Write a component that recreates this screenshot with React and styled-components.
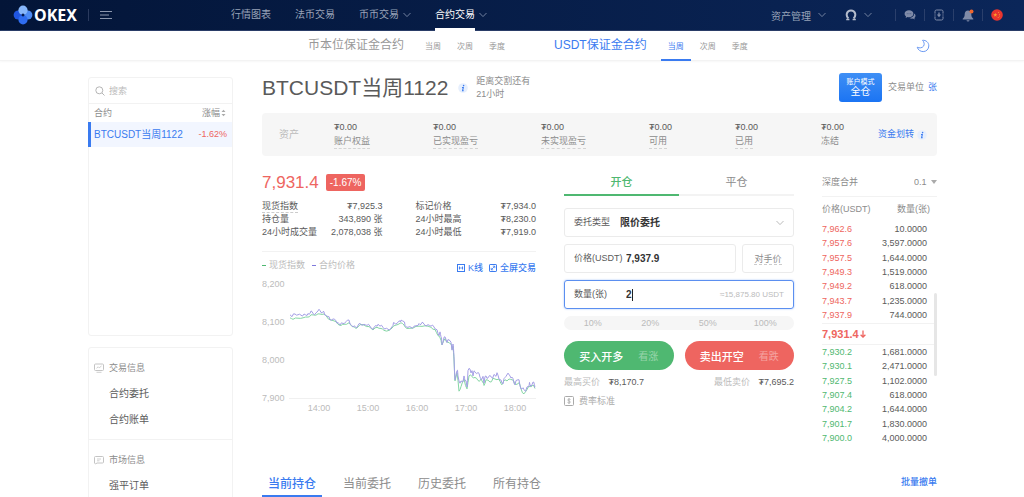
import React, { useState } from "react";
import styled, { createGlobalStyle } from "styled-components";

const colors = {
  blue: "#3a7bf0",
  green: "#4fb871",
  red: "#ee6560",
  text: "#5a5a5a",
  muted: "#8c8c8c",
  faint: "#bbb",
  line: "#f2f2f2",
  panel: "#f6f6f6",
};

const navItems = [
  { label: "行情图表" },
  { label: "法币交易" },
  { label: "币币交易", menu: true },
  { label: "合约交易", menu: true, active: true },
];

const contractGroups = [
  { title: "币本位保证金合约", tabs: ["当周", "次周", "季度"] },
  { title: "USDT保证金合约", tabs: ["当周", "次周", "季度"], active: "当周" },
];

const assets = [
  { label: "账户权益", hint: true },
  { label: "已实现盈亏", hint: true },
  { label: "未实现盈亏", hint: true },
  { label: "可用", hint: true },
  { label: "已用", hint: true },
  { label: "冻结" },
];

const stats = [
  [
    { label: "现货指数", value: "₮7,925.3", hint: true },
    { label: "持仓量", value: "343,890 张" },
    { label: "24小时成交量", value: "2,078,038 张" },
  ],
  [
    { label: "标记价格", value: "₮7,934.0" },
    { label: "24小时最高", value: "₮8,230.0" },
    { label: "24小时最低", value: "₮7,919.0" },
  ],
];

const asks = [
  ["7,962.6", "10.0000"],
  ["7,957.6", "3,597.0000"],
  ["7,957.5", "1,644.0000"],
  ["7,949.3", "1,519.0000"],
  ["7,949.2", "618.0000"],
  ["7,943.7", "1,235.0000"],
  ["7,937.9", "744.0000"],
];

const bids = [
  ["7,930.2", "1,681.0000"],
  ["7,930.1", "2,471.0000"],
  ["7,927.5", "1,102.0000"],
  ["7,907.4", "618.0000"],
  ["7,904.2", "1,644.0000"],
  ["7,901.7", "1,830.0000"],
  ["7,900.0", "4,000.0000"],
];

// [x, price] samples, x is in chart units
const contractSeries = [
  [28, 8119], [30, 8114], [33, 8121], [36, 8119], [39, 8118], [42, 8121], [45, 8117], [47, 8120],
  [49, 8129], [51, 8122], [54, 8124], [56, 8129], [58, 8130], [60, 8124], [62, 8127], [63, 8119],
  [66, 8114], [68, 8106], [71, 8108], [74, 8103], [76, 8099], [78, 8092], [81, 8096], [84, 8101],
  [87, 8105], [89, 8093], [91, 8087], [94, 8085], [96, 8091], [98, 8096], [102, 8094], [105, 8091],
  [108, 8089], [111, 8081], [114, 8091], [116, 8094], [118, 8089], [121, 8086], [123, 8082],
  [126, 8081], [129, 8084], [131, 8091], [132, 8098], [135, 8096], [138, 8103], [139, 8105],
  [142, 8101], [143, 8091], [146, 8086], [149, 8086], [152, 8089], [156, 8091], [158, 8093],
  [160, 8099], [162, 8094], [166, 8093], [169, 8089], [172, 8087], [174, 8081], [176, 8070],
  [178, 8074], [179, 8061], [180, 8040], [182, 8060], [184, 8054], [186, 8054], [188, 8051],
  [190, 8026], [191, 8042], [192, 8009], [193, 7948], [195, 7972], [196, 7958], [198, 7939],
  [200, 7943], [202, 7958], [203, 7946], [205, 7929], [206, 7972], [208, 7976], [210, 7972],
  [211, 7958], [213, 7969], [216, 7967], [218, 7955], [221, 7957], [222, 7939], [224, 7958],
  [226, 7953], [229, 7957], [232, 7962], [234, 7957], [236, 7960], [238, 7948], [240, 7939],
  [242, 7951], [244, 7957], [248, 7958], [250, 7955], [252, 7939], [254, 7946], [256, 7948],
  [258, 7932], [260, 7924], [262, 7922], [265, 7929], [267, 7931], [268, 7935], [270, 7935],
  [272, 7941], [273, 7932],
];

const indexSeries = [
  [28, 8111], [31, 8107], [36, 8110], [41, 8111], [46, 8113], [49, 8119], [54, 8118], [58, 8121],
  [62, 8121], [65, 8113], [68, 8106], [72, 8103], [76, 8094], [79, 8091], [82, 8094], [87, 8098],
  [90, 8088], [94, 8083], [98, 8093], [102, 8092], [107, 8088], [111, 8079], [115, 8086],
  [119, 8083], [122, 8078], [127, 8078], [130, 8084], [133, 8091], [139, 8098], [142, 8092],
  [145, 8083], [151, 8084], [157, 8089], [163, 8090], [169, 8086], [173, 8080], [176, 8064],
  [179, 8052], [180, 8040], [183, 8056], [186, 8047], [189, 8042], [190, 8028], [191, 8036],
  [192, 8000], [193, 7945], [195, 7966], [197, 7918], [199, 7930], [202, 7950], [205, 7924],
  [207, 7958], [210, 7956], [213, 7954], [216, 7946], [219, 7950], [221, 7940], [222, 7933],
  [224, 7948], [228, 7942], [231, 7952], [235, 7948], [238, 7944], [240, 7935], [243, 7948],
  [247, 7950], [250, 7948], [253, 7936], [257, 7940], [259, 7924], [262, 7911], [265, 7922],
  [268, 7930], [271, 7934], [273, 7925],
];

// the trade price gets a small tick between two samples, larger after the drop
const toPath = (series, spread) => {
  const y = (price) => 120 - ((price - 7900) * 38) / 100;
  let d = "";
  series.forEach(([x, price], i) => {
    if (i === 0) {
      d = `M${x} ${y(price)}`;
      return;
    }
    const [px, pp] = series[i - 1];
    const mid = (px + x) / 2;
    const jitter = (((i * 7) % 5) - 2) * (x > 174 ? spread * 2 : spread);
    d += ` L${mid} ${y((pp + price) / 2 + jitter)} L${x} ${y(price)}`;
  });
  return d;
};

const GlobalStyle = createGlobalStyle`
  * {
    box-sizing: border-box;
  }

  body {
    margin: 0;
    background: #fff;
  }

  body, button, input, select {
    font-family: "Liberation Sans", "Noto Sans CJK SC", sans-serif;
  }

  button, input, select {
    margin: 0;
    padding: 0;
    border: 0;
    background: none;
    font-size: 9px;
    color: inherit;
    outline: none;
  }

  a {
    color: inherit;
    text-decoration: none;
  }

  svg {
    display: block;
    flex: none;
  }
`;

/* ---------- icons ---------- */

const Chevron = ({ color = "#71809f" }) => (
  <svg width="8" height="6" viewBox="0 0 8 6" fill="none" stroke={color}>
    <path d="M0.5 1 L4 4.6 L7.5 1" />
  </svg>
);

const Logo = () => (
  <svg width="20" height="20" viewBox="0 0 20 20">
    <circle cx="5.2" cy="10" r="4.6" fill="#1f55e0" />
    <circle cx="14.8" cy="10" r="4.6" fill="#4d8bf3" />
    <circle cx="10" cy="14.8" r="4.6" fill="#2f6df0" />
    <circle cx="10" cy="5.2" r="4.6" fill="#86b6fa" />
    <path d="M10 8.2 L11.8 10 L10 11.8 L8.2 10Z" fill="#04184a" />
  </svg>
);

const MenuIcon = () => (
  <svg width="12" height="10" viewBox="0 0 12 10" stroke="#8b96ad">
    <path d="M0 1.5H12M0 5H9M0 8.5H12" />
  </svg>
);

const HeadsetIcon = () => (
  <svg width="12" height="12" viewBox="0 0 12 12" fill="none" stroke="#b4bccc">
    <path d="M3.4 9.4C.4 6.6 1.6 1.5 6 1.500s5.600 5.100 2.600 7.900" strokeWidth="2" />
    <path d="M1.200 10.400h3.200M7.600 10.400h3.200" strokeWidth="1.500" />
  </svg>
);

const ChatIcon = () => (
  <svg width="12" height="12" viewBox="0 0 12 12" fill="#7f8ba8">
    <path d="M5 1.200c2.500 0 4.400 1.500 4.400 3.500S7.500 8.200 5 8.200c-.5 0-1 0-1.400-.2L1.700 9l.3-1.700C1.100 6.700.6 5.800.6 4.700.6 2.700 2.500 1.200 5 1.200z" />
    <path d="M10.200 4.600c.8.500 1.300 1.300 1.300 2.200 0 .9-.4 1.600-1.100 2.100l.3 1.600-1.700-.9c-1.300.2-2.700-.1-3.500-.7 2.900-.1 4.800-1.900 4.700-4.300z" />
    <path d="M2.800 4.700h.8M4.600 4.700h.8M6.400 4.700h.8" stroke="#3a4d78" strokeWidth=".8" />
  </svg>
);

const DownloadIcon = () => (
  <svg width="10" height="12" viewBox="0 0 10 12" fill="none" stroke="#7f8ba8">
    <path d="M1 4V2.500A1.500 1.500 0 0 1 2.500 1h5A1.500 1.500 0 0 1 9 2.500V4M1 8v1.500A1.500 1.500 0 0 0 2.500 11h5A1.500 1.500 0 0 0 9 9.500V8" />
    <path d="M1 4v4M9 4v4" strokeOpacity=".6" />
    <path d="M5 3.500v3" strokeWidth="1.300" />
    <path d="M2.800 5.600H7.200L5 8.200z" fill="#7f8ba8" stroke="none" />
  </svg>
);

const BellIcon = () => (
  <svg width="12" height="13" viewBox="0 0 12 13">
    <path d="M6 1.500c2 0 3.300 1.500 3.300 3.600 0 2.400.5 3.300 2 4.700v.7H.7v-.7c1.500-1.400 2-2.300 2-4.700C2.700 3 4 1.500 6 1.500z" fill="#7f8ba8" />
    <path d="M4.500 11.300h3a1.500 1.200 0 0 1-3 0z" fill="#7f8ba8" />
    <circle cx="9.500" cy="2.500" r="2" fill="#f0672e" />
  </svg>
);

const FlagIcon = () => (
  <svg width="12" height="12" viewBox="0 0 12 12">
    <circle cx="6" cy="6" r="5.800" fill="#e8352f" />
    <path d="M4.300 3.800l.5 1.500h1.600L5.100 6.200l.5 1.500-1.300-.9L3 7.700l.5-1.500-1.300-.9h1.600z" fill="#fba52d" />
    <circle cx="7.600" cy="3.600" r=".5" fill="#fba52d" />
    <circle cx="8.600" cy="5.200" r=".5" fill="#fba52d" />
    <circle cx="8.400" cy="7" r=".5" fill="#fba52d" />
    <circle cx="7.200" cy="8.400" r=".5" fill="#fba52d" />
  </svg>
);

const MoonIcon = () => (
  <svg width="14" height="14" viewBox="0 0 14 14" fill="none" stroke="#6d9bf3">
    <path d="M6.500 1.300C10 1 12.800 3.400 12.800 6.900c0 3.300-2.500 5.700-5.600 5.700-2.800 0-5.200-1.700-6-4.400 2.300 1.200 5 .8 6.300-1C8.700 5.500 8.300 3 6.500 1.300z" />
  </svg>
);

const SearchIcon = () => (
  <svg width="10" height="10" viewBox="0 0 10 10" fill="none" stroke="#b5b5b5">
    <circle cx="4.300" cy="4.300" r="3.500" />
    <path d="M7 7l2.500 2.500" />
  </svg>
);

const SortIcon = () => (
  <svg width="5" height="8" viewBox="0 0 5 8" fill="#aaa">
    <path d="M.5 3 2.500.8 4.500 3zM.5 5l2 2.200 2-2.200z" />
  </svg>
);

const TradeInfoIcon = () => (
  <svg width="10" height="10" viewBox="0 0 10 10" fill="none" stroke="#c4c4c4">
    <rect x=".5" y="1" width="9" height="6.500" rx="1" />
    <path d="M2.500 5.300 4.200 3.800l1 1L7.500 3M2.500 9.300h5" strokeWidth=".8" />
  </svg>
);

const MarketInfoIcon = () => (
  <svg width="10" height="10" viewBox="0 0 10 10" fill="none" stroke="#c4c4c4">
    <path d="M1.500 1.500h7a1 1 0 0 1 1 1V7a1 1 0 0 1-1 1H3L1.500 9 .5 8V2.500a1 1 0 0 1 1-1z" />
    <path d="M3 4h4M3 5.800h2.500" strokeWidth=".8" />
  </svg>
);

const KLineIcon = () => (
  <svg width="8" height="8" viewBox="0 0 8 8" fill="none" stroke={colors.blue}>
    <rect x=".5" y=".5" width="7" height="7" />
    <path d="M2.500 2.500v3M5.500 2.500v3" strokeWidth=".9" />
    <path d="M1.800 4h4.400" strokeWidth=".7" />
  </svg>
);

const ExpandIcon = () => (
  <svg width="8" height="8" viewBox="0 0 8 8" fill="none" stroke={colors.blue}>
    <rect x=".5" y=".5" width="7" height="7" rx=".6" />
    <path d="M2.300 5.700l3.400-3.400M3.800 2.200h2v2M2.200 3.800v2h2" strokeWidth=".8" />
  </svg>
);

const FeeIcon = () => (
  <svg width="10" height="10" viewBox="0 0 10 10" fill="none" stroke="#aaa">
    <rect x=".5" y=".5" width="9" height="9" rx="1" />
    <path d="M6.500 3.500C6 2.900 3.700 2.800 3.700 4s2.700.8 2.700 2-2.300 1.200-2.900.4M5 2v6" strokeWidth=".8" />
  </svg>
);

const InfoIcon = () => (
  <svg width="10" height="10" viewBox="0 0 10 10">
    <circle cx="5" cy="5" r="4.800" fill="#e6effd" />
    <circle cx="5.600" cy="2.600" r=".8" fill={colors.blue} />
    <path d="M4 4.500h1.300L4.600 7.600H5.600" fill="none" stroke={colors.blue} strokeWidth="1.100" />
  </svg>
);

/* ---------- header ---------- */

const Page = styled.div`
  height: 100vh;
  overflow: hidden;
  color: ${colors.text};
  font-size: 9px;
  line-height: 13px;
`;

const Header = styled.header`
  display: flex;
  align-items: center;
  height: 31px;
  padding: 0 13px;
  background: linear-gradient(90deg, #031538, #0b2659);
  border-bottom: 1px solid #1a2f5c;
  color: #98a3b8;
  font-size: 10px;
`;

const Brand = styled.div`
  display: flex;
  align-items: center;
  flex: 0 0 218px;
`;

const BrandLink = styled.a`
  display: flex;
  align-items: center;
  gap: 1px;
  color: #fff;
  font-family: "Noto Sans", sans-serif;
  font-size: 16px;
  font-weight: 700;
`;

const BrandDivider = styled.span`
  width: 1px;
  height: 12px;
  margin: 0 11px;
  background: #2a3a5e;
`;

const IconButton = styled.button`
  display: flex;
  align-items: center;
  gap: 7px;
  cursor: pointer;
`;

const Nav = styled.nav`
  display: flex;
  gap: 24px;
  height: 31px;
`;

const NavItem = styled.a`
  display: flex;
  align-items: center;
  gap: 4px;
  color: ${({ $active }) => ($active ? "#fff" : "inherit")};

  span {
    line-height: 26px;
    border-top: 2px solid transparent;
    border-bottom: 3px solid ${({ $active }) => ($active ? "#fff" : "transparent")};
  }
`;

const HeaderTools = styled.div`
  display: flex;
  align-items: center;
  margin-left: auto;
`;

const AccountLinks = styled.div`
  display: flex;
  align-items: center;
  gap: 19px;
  margin-right: 23px;

  button {
    font-size: 10px;
  }
`;

const ToolButton = styled.button`
  display: flex;
  align-items: center;
  justify-content: center;
  width: 29px;
  height: 12px;
  border-left: 1px solid #2a3f6b;
`;

/* ---------- contract bar ---------- */

const ContractBar = styled.div`
  display: flex;
  align-items: center;
  height: 30px;
  padding: 0 94px 0 308px;
  border-bottom: 1px solid #f3f3f3;
  box-shadow: 0 1px 2px #f7f7f7;
`;

const ContractGroup = styled.div`
  display: flex;
  align-items: center;
  gap: 14px;
  margin-right: 42px;
  color: ${({ $active }) => ($active ? colors.blue : "#999")};
  font-size: 12px;
`;

const ContractTabs = styled.div`
  display: flex;
  gap: 2px;
`;

const ContractTab = styled.a`
  height: 30px;
  padding: 0 7px;
  border-bottom: 2px solid ${({ $active }) => ($active ? colors.blue : "transparent")};
  color: ${({ $active }) => ($active ? colors.blue : "#999")};
  font-size: 8px;
  line-height: 32px;
`;

const ThemeButton = styled.button`
  margin-left: auto;
`;

/* ---------- sidebar ---------- */

const Content = styled.main`
  display: flex;
  gap: 29px;
  padding: 12px 87px 0 88px;
`;

const Sidebar = styled.aside`
  flex: 0 0 144px;
  padding-top: 4px;
`;

const Card = styled.section`
  border: 1px solid ${colors.line};
  border-radius: 3px;
`;

const ContractList = styled(Card)`
  height: 259px;
  margin-bottom: 11px;
`;

const SearchBox = styled.label`
  display: flex;
  align-items: center;
  gap: 4px;
  height: 26px;
  padding: 0 6px;
  border-bottom: 1px solid ${colors.line};

  input {
    flex: 1;
    min-width: 0;
    font-size: 9px;
  }

  input::placeholder {
    color: ${colors.faint};
  }
`;

const ListHead = styled.div`
  display: flex;
  align-items: center;
  justify-content: space-between;
  height: 18px;
  padding: 0 6px 0 5px;
  color: ${colors.muted};

  span {
    display: flex;
    align-items: center;
    gap: 1px;
  }
`;

const ContractRow = styled.a`
  display: flex;
  align-items: center;
  justify-content: space-between;
  height: 25px;
  margin-left: -1px;
  padding: 0 5px 0 3px;
  border-left: 3px solid ${colors.blue};
  background: #f2f6ff;
  color: ${colors.blue};
  font-size: 10px;

  em {
    color: ${colors.red};
    font-size: 9px;
    font-style: normal;
  }
`;

const MenuSection = styled.div`
  padding: 7px 5px 6px;
  border-bottom: 1px solid ${colors.line};
`;

const MenuTitle = styled.div`
  display: flex;
  align-items: center;
  gap: 5px;
  height: 26px;
  color: ${colors.muted};
`;

const MenuLink = styled.a`
  display: block;
  padding-left: 15px;
  font-size: 10px;
  line-height: 26px;
`;

/* ---------- title and assets ---------- */

const Main = styled.div`
  flex: 1;
  min-width: 0;
`;

const TitleRow = styled.div`
  display: flex;
  align-items: center;
  height: 29px;
  color: ${colors.muted};
`;

const Title = styled.h1`
  margin: 0 10px 0 0;
  color: ${colors.text};
  font-size: 21px;
  font-weight: 400;
  line-height: 29px;
`;

const Countdown = styled.div`
  margin-left: 8px;
`;

const ModeButton = styled.button`
  width: 43px;
  height: 29px;
  margin: 0 6px 0 auto;
  border-radius: 3px;
  background: linear-gradient(#3f8ff5, #1b74f3);
  color: #fff;
  font-size: 10px;
  line-height: 12px;

  small {
    display: block;
    font-size: 7px;
    line-height: 9px;
  }
`;

const TextLink = styled.a`
  display: inline-flex;
  align-items: center;
  gap: 3px;
  color: ${colors.blue};
  font-weight: ${({ $strong }) => ($strong ? 500 : 400)};
`;

const UnitLabel = styled.span`
  margin-right: 4px;
`;

const AssetPanel = styled.section`
  display: flex;
  align-items: center;
  height: 43px;
  margin-top: 11px;
  padding: 0 10px 0 17px;
  border-radius: 4px;
  background: ${colors.panel};
`;

const AssetTitle = styled.span`
  color: ${colors.faint};
  font-size: 10px;
`;

const AssetList = styled.dl`
  display: flex;
  flex: 1;
  justify-content: space-between;
  margin: 0 34px 0 35px;
`;

const AssetItem = styled.div`
  display: flex;
  flex-direction: column;
  align-items: flex-start;

  dt {
    order: 2;
    color: ${colors.muted};
    line-height: 14px;
    border-bottom: 1px dashed ${({ $hint }) => ($hint ? "#d4d4d4" : "transparent")};
  }

  dd {
    margin: 0;
    line-height: 14px;
  }
`;

const Columns = styled.div`
  display: grid;
  grid-template-columns: 274fr 230fr 115fr;
  gap: 28px;
  margin-top: 12px;
`;

/* ---------- quote ---------- */

const PriceRow = styled.div`
  display: flex;
  align-items: center;
  gap: 7px;
  height: 28px;
  color: ${colors.red};
  font-size: 17px;
`;

const ChangeBadge = styled.span`
  padding: 0 4px;
  border-radius: 2px;
  background: ${colors.red};
  color: #fff;
  font-size: 10px;
  line-height: 17px;
`;

const StatGrid = styled.div`
  display: grid;
  grid-template-columns: 1fr 1fr;
  gap: 33px;
  padding: 4px 0 12px;
  border-bottom: 1px solid ${colors.line};
`;

const StatList = styled.dl`
  margin: 0;
`;

const StatRow = styled.div`
  display: flex;
  justify-content: space-between;
  height: 13px;

  dt {
    border-bottom: 1px dashed ${({ $hint }) => ($hint ? "#ccc" : "transparent")};
  }

  dd {
    margin: 0;
  }
`;

const ChartBar = styled.div`
  display: flex;
  justify-content: space-between;
  height: 26px;
`;

const Legend = styled.div`
  display: flex;
  gap: 7px;
  color: ${colors.faint};
  line-height: 22px;
`;

const LegendItem = styled.span`
  display: flex;
  align-items: center;
  gap: 3px;

  &::before {
    content: "";
    width: 4px;
    height: 1px;
    background: ${({ $color }) => $color};
  }
`;

const ChartLinks = styled.div`
  display: flex;
  align-self: flex-end;
  gap: 6px;
  line-height: 20px;
`;

const Chart = styled.svg`
  width: 100%;

  text {
    fill: ${colors.faint};
    font-size: 9px;
  }
`;

/* ---------- order form ---------- */

const OrderForm = styled.form`
  display: flex;
  flex-direction: column;
`;

const SideTabs = styled.div`
  display: grid;
  grid-template-columns: 1fr 1fr;
  margin-bottom: 12px;
`;

const SideTab = styled.button`
  height: 28px;
  border-bottom: 2px solid ${({ $active }) => ($active ? colors.green : "#f3f3f3")};
  color: ${({ $active }) => ($active ? colors.green : colors.muted)};
  font-size: 11px;
  font-weight: ${({ $active }) => ($active ? 500 : 400)};
`;

const FieldRow = styled.div`
  display: flex;
  gap: 6px;
  margin-bottom: 7px;
`;

const Field = styled.label`
  display: flex;
  align-items: center;
  flex: 1;
  min-width: 0;
  height: 29px;
  padding: 0 9px;
  border: 1px solid ${({ $focus }) => ($focus ? "#5b8ff0" : "#ebebeb")};
  border-radius: 3px;
  box-shadow: ${({ $focus }) => ($focus ? "0 0 2px #9dbdf7" : "none")};

  select {
    flex: 1;
    appearance: none;
    color: #333;
    font-size: 10px;
    font-weight: 700;
  }
`;

const FieldName = styled.span`
  flex: 0 0 ${({ $wide }) => ($wide ? 52 : 46)}px;
  white-space: nowrap;
`;

const NumberInput = styled.input`
  flex: ${({ $tight }) => ($tight ? "0 0 6px" : "1")};
  width: 6px;
  min-width: 0;
  color: #333;
  font-size: 10px;
  font-weight: 700;
`;

const Caret = styled.span`
  width: 1px;
  height: 12px;
  background: #222;
`;

const Estimate = styled.span`
  margin-left: auto;
  color: ${colors.faint};
  font-size: 8px;
`;

const PriceButton = styled.button`
  flex: 0 0 52px;
  border: 1px solid #ebebeb;
  border-radius: 3px;
  color: ${colors.muted};

  span {
    border-bottom: 1px dashed #ccc;
  }
`;

const PercentBar = styled.div`
  display: grid;
  grid-template-columns: repeat(4, 1fr);
  height: 14px;
  margin-bottom: 11px;
  border-radius: 7px;
  background: ${colors.panel};

  button {
    color: ${colors.faint};
  }
`;

const OrderButtons = styled.div`
  display: grid;
  grid-template-columns: 1fr 1fr;
  gap: 11px;
`;

const OrderButton = styled.button`
  display: flex;
  align-items: center;
  justify-content: center;
  gap: 15px;
  height: 29px;
  border-radius: 15px;
  background: ${({ $sell }) => ($sell ? colors.red : colors.green)};
  color: #fff;
  font-size: 11px;
  font-weight: 500;

  span {
    font-size: 10px;
    font-weight: 400;
    opacity: 0.4;
  }
`;

const LimitRow = styled.div`
  display: flex;
  justify-content: space-between;
  margin: 4px 0 3px;
  color: ${colors.faint};
  line-height: 16px;

  b {
    margin-left: 6px;
    color: ${colors.text};
    font-weight: 400;
  }
`;

const FeeLink = styled.a`
  display: flex;
  align-items: center;
  gap: 5px;
  color: #aaa;
  line-height: 16px;
`;

/* ---------- order book ---------- */

const DepthRow = styled.label`
  display: flex;
  align-items: center;
  height: 29px;
  border-bottom: 1px solid ${colors.line};
  color: ${colors.muted};

  select {
    margin-left: auto;
    margin-right: 4px;
    appearance: none;
  }
`;

const BookBody = styled.div`
  display: flex;
`;

const BookTables = styled.div`
  flex: 1;
`;

const BookTable = styled.table`
  width: 100%;
  height: ${({ $head }) => ($head ? 126 : 101)}px;
  border-collapse: collapse;

  th {
    height: 25px;
    padding: 0 4px 0 0;
    color: ${colors.muted};
    font-weight: 400;
    text-align: left;
    white-space: nowrap;
  }

  td {
    padding: 0 7px 0 0;
  }

  td:first-child {
    color: ${({ $color }) => $color};
  }

  th:last-child,
  td:last-child {
    text-align: right;
  }
`;

const LastPrice = styled.div`
  display: flex;
  align-items: center;
  gap: 1px;
  height: 22px;
  border-top: 1px solid ${colors.line};
  border-bottom: 1px solid ${colors.line};
  color: ${colors.red};
  font-size: 11px;
  font-weight: 700;
`;

const ScrollTrack = styled.div`
  flex: 0 0 3px;
  padding-top: 96px;
`;

const ScrollThumb = styled.div`
  height: 83px;
  border-radius: 2px;
  background: #e6e6e6;
`;

/* ---------- positions ---------- */

const PositionBar = styled.div`
  display: flex;
  align-items: center;
  justify-content: space-between;
  margin-top: 22px;
`;

const PositionTabs = styled.div`
  display: flex;
  gap: 15px;
`;

const PositionTab = styled.button`
  height: 29px;
  padding: 2px 6px 0;
  border-bottom: 2px solid ${({ $active }) => ($active ? colors.blue : "transparent")};
  color: ${({ $active }) => ($active ? colors.blue : colors.muted)};
  font-size: 12px;
  font-weight: ${({ $active }) => ($active ? 500 : 400)};
`;

const PriceChart = () => (
  <Chart viewBox="0 0 274 140" fill="none">
    {["8,200", "8,100", "8,000", "7,900"].map((label, i) => (
      <text key={label} x="0" y={9 + i * 38}>
        {label}
      </text>
    ))}
    {["14:00", "15:00", "16:00", "17:00", "18:00"].map((label, i) => (
      <text key={label} x={57 + i * 49} y="133" textAnchor="middle">
        {label}
      </text>
    ))}
    <path d="M27 120.500H274" stroke="#f0f0f0" />
    <path d={toPath(indexSeries, 1)} stroke="#85d6a4" />
    <path d={toPath(contractSeries, 2)} stroke="#a49fe6" />
  </Chart>
);

const Book = ({ rows, color, head }) => (
  <BookTable $color={color} $head={head}>
    {head && (
      <thead>
        <tr>
          <th>价格(USDT)</th>
          <th>数量(张)</th>
        </tr>
      </thead>
    )}
    <tbody>
      {rows.map(([price, amount]) => (
        <tr key={price}>
          <td>{price}</td>
          <td>{amount}</td>
        </tr>
      ))}
    </tbody>
  </BookTable>
);

const App = () => {
  const [price, setPrice] = useState("7,937.9");
  const [amount, setAmount] = useState("2");

  return (
    <Page>
      <GlobalStyle />
      <Header>
        <Brand>
          <BrandLink href="#">
            <Logo />
            OKEX
          </BrandLink>
          <BrandDivider />
          <IconButton type="button">
            <MenuIcon />
          </IconButton>
        </Brand>
        <Nav>
          {navItems.map(({ label, menu, active }) => (
            <NavItem key={label} href="#" $active={active}>
              <span>{label}</span>
              {menu && <Chevron />}
            </NavItem>
          ))}
        </Nav>
        <HeaderTools>
          <AccountLinks>
            <IconButton type="button">
              资产管理
              <Chevron />
            </IconButton>
            <IconButton type="button">
              <HeadsetIcon />
              <Chevron />
            </IconButton>
          </AccountLinks>
          <ToolButton type="button"><ChatIcon /></ToolButton>
          <ToolButton type="button"><DownloadIcon /></ToolButton>
          <ToolButton type="button"><BellIcon /></ToolButton>
          <ToolButton type="button"><FlagIcon /></ToolButton>
        </HeaderTools>
      </Header>

      <ContractBar>
        {contractGroups.map(({ title, tabs, active }) => (
          <ContractGroup key={title} $active={Boolean(active)}>
            {title}
            <ContractTabs>
              {tabs.map((tab) => (
                <ContractTab key={tab} href="#" $active={tab === active}>
                  {tab}
                </ContractTab>
              ))}
            </ContractTabs>
          </ContractGroup>
        ))}
        <ThemeButton type="button"><MoonIcon /></ThemeButton>
      </ContractBar>

      <Content>
        <Sidebar>
          <ContractList>
            <SearchBox>
              <SearchIcon />
              <input type="text" placeholder="搜索" />
            </SearchBox>
            <ListHead>
              合约
              <span>
                涨幅
                <SortIcon />
              </span>
            </ListHead>
            <ContractRow href="#">
              BTCUSDT当周1122
              <em>-1.62%</em>
            </ContractRow>
          </ContractList>
          <Card>
            <MenuSection>
              <MenuTitle><TradeInfoIcon />交易信息</MenuTitle>
              <MenuLink href="#">合约委托</MenuLink>
              <MenuLink href="#">合约账单</MenuLink>
            </MenuSection>
            <MenuSection>
              <MenuTitle><MarketInfoIcon />市场信息</MenuTitle>
              <MenuLink href="#">强平订单</MenuLink>
            </MenuSection>
          </Card>
        </Sidebar>

        <Main>
          <TitleRow>
            <Title>BTCUSDT当周1122</Title>
            <InfoIcon />
            <Countdown>
              距离交割还有
              <br />
              21小时
            </Countdown>
            <ModeButton type="button">
              <small>账户模式</small>
              全仓
            </ModeButton>
            <UnitLabel>交易单位</UnitLabel>
            <TextLink href="#">张</TextLink>
          </TitleRow>

          <AssetPanel>
            <AssetTitle>资产</AssetTitle>
            <AssetList>
              {assets.map(({ label, hint }) => (
                <AssetItem key={label} $hint={hint}>
                  <dt>{label}</dt>
                  <dd>₮0.00</dd>
                </AssetItem>
              ))}
            </AssetList>
            <TextLink href="#">
              资金划转
              <InfoIcon />
            </TextLink>
          </AssetPanel>

          <Columns>
            <section>
              <PriceRow>
                7,931.4
                <ChangeBadge>-1.67%</ChangeBadge>
              </PriceRow>
              <StatGrid>
                {stats.map((list, i) => (
                  <StatList key={i}>
                    {list.map(({ label, value, hint }) => (
                      <StatRow key={label} $hint={hint}>
                        <dt>{label}</dt>
                        <dd>{value}</dd>
                      </StatRow>
                    ))}
                  </StatList>
                ))}
              </StatGrid>
              <ChartBar>
                <Legend>
                  <LegendItem $color={colors.green}>现货指数</LegendItem>
                  <LegendItem $color="#7f79dc">合约价格</LegendItem>
                </Legend>
                <ChartLinks>
                  <TextLink href="#" $strong><KLineIcon />K线</TextLink>
                  <TextLink href="#" $strong><ExpandIcon />全屏交易</TextLink>
                </ChartLinks>
              </ChartBar>
              <PriceChart />
            </section>

            <OrderForm>
              <SideTabs>
                <SideTab type="button" $active>开仓</SideTab>
                <SideTab type="button">平仓</SideTab>
              </SideTabs>
              <FieldRow>
                <Field>
                  <FieldName>委托类型</FieldName>
                  <select defaultValue="limit">
                    <option value="limit">限价委托</option>
                  </select>
                  <Chevron color="#bbb" />
                </Field>
              </FieldRow>
              <FieldRow>
                <Field>
                  <FieldName $wide>价格(USDT)</FieldName>
                  <NumberInput value={price} onChange={(e) => setPrice(e.target.value)} />
                </Field>
                <PriceButton type="button"><span>对手价</span></PriceButton>
              </FieldRow>
              <FieldRow>
                <Field $focus>
                  <FieldName $wide>数量(张)</FieldName>
                  <NumberInput $tight value={amount} onChange={(e) => setAmount(e.target.value)} />
                  <Caret />
                  <Estimate>≈15,875.80 USDT</Estimate>
                </Field>
              </FieldRow>
              <PercentBar>
                {["10%", "20%", "50%", "100%"].map((label) => (
                  <button key={label} type="button">{label}</button>
                ))}
              </PercentBar>
              <OrderButtons>
                <OrderButton type="button">买入开多<span>看涨</span></OrderButton>
                <OrderButton type="button" $sell>卖出开空<span>看跌</span></OrderButton>
              </OrderButtons>
              <LimitRow>
                <span>最高买价 <b>₮8,170.7</b></span>
                <span>最低卖价 <b>₮7,695.2</b></span>
              </LimitRow>
              <FeeLink href="#"><FeeIcon />费率标准</FeeLink>
            </OrderForm>

            <section>
              <DepthRow>
                深度合并
                <select defaultValue="0.1">
                  <option>0.1</option>
                </select>
                <svg width="6" height="4" viewBox="0 0 6 4" fill="#aaa">
                  <path d="M0 0H6L3 4Z" />
                </svg>
              </DepthRow>
              <BookBody>
                <BookTables>
                  <Book rows={asks} color={colors.red} head />
                  <LastPrice>
                    7,931.4
                    <svg width="6" height="8" viewBox="0 0 6 8" fill="none" stroke={colors.red} strokeWidth="1.300">
                      <path d="M3 .5V7M.6 4.700 3 7.100 5.400 4.700" />
                    </svg>
                  </LastPrice>
                  <Book rows={bids} color={colors.green} />
                </BookTables>
                <ScrollTrack>
                  <ScrollThumb />
                </ScrollTrack>
              </BookBody>
            </section>
          </Columns>

          <PositionBar>
            <PositionTabs>
              {["当前持仓", "当前委托", "历史委托", "所有持仓"].map((label, i) => (
                <PositionTab key={label} type="button" $active={i === 0}>
                  {label}
                </PositionTab>
              ))}
            </PositionTabs>
            <TextLink href="#" $strong>批量撤单</TextLink>
          </PositionBar>
        </Main>
      </Content>
    </Page>
  );
};

export default App;
